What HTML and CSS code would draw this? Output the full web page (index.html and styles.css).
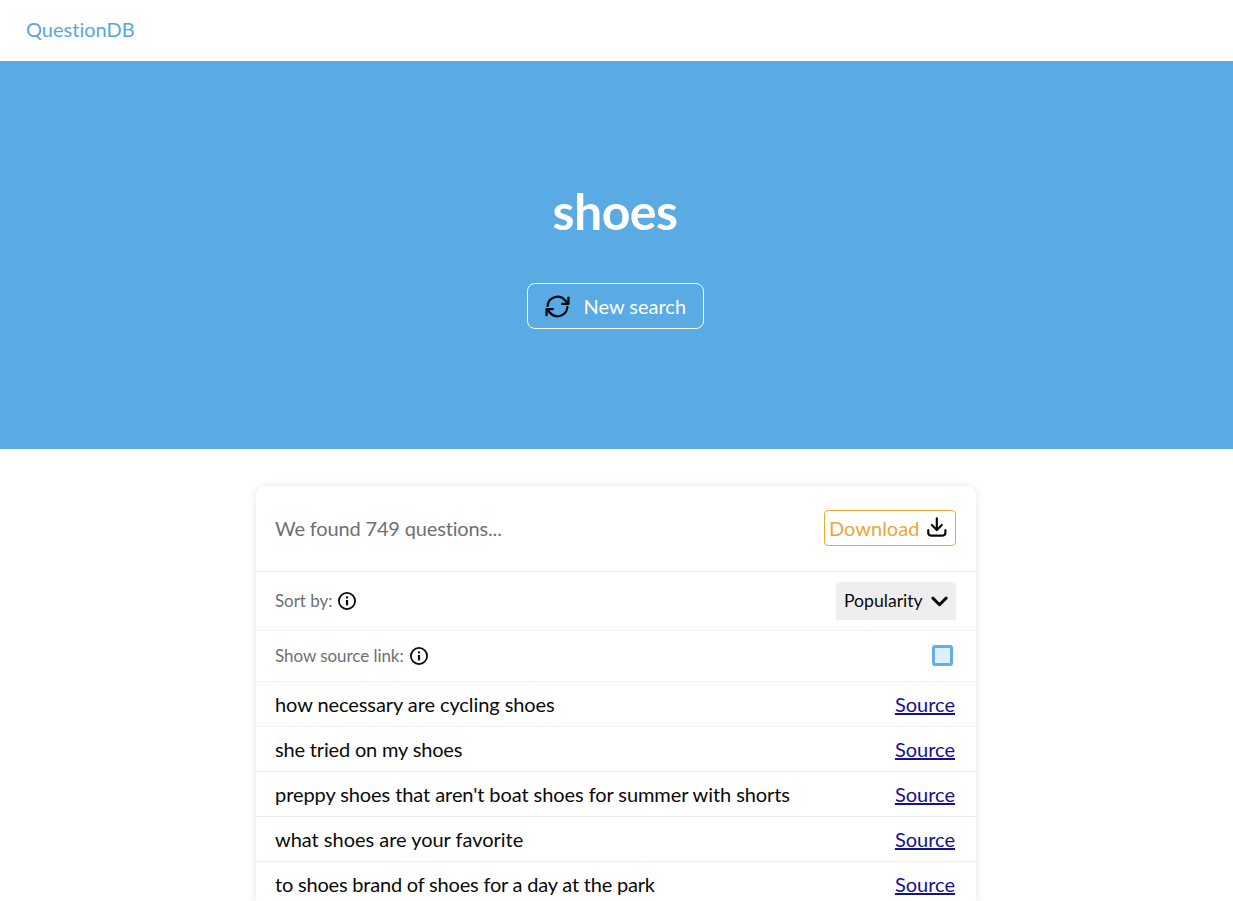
FILE: index.html
```html
<!DOCTYPE html>
<html lang="en">
<head>
<meta charset="utf-8">
<title>QuestionDB - shoes</title>
<link rel="stylesheet" href="styles.css">
</head>
<body>
<nav class="navbar"><a class="brand" href="#">QuestionDB</a></nav>
<section class="hero">
  <h1 class="hero-title">shoes</h1>
  <a class="new-search" href="#">
    <svg class="refresh-icon" viewBox="0 0 24 24" fill="none" stroke="currentColor" stroke-width="2.2" stroke-linecap="round" stroke-linejoin="round"><path d="M2.5 11.5A9.5 9.5 0 0 1 19.2 6L22 9"/><path d="M22.5 3.5V9.5H16.5"/><path d="M21.5 12.5A9.5 9.5 0 0 1 4.8 18L2 15"/><path d="M1.5 20.5V14.5H7.5"/></svg>
    <span>New search</span>
  </a>
</section>
<main class="content">
  <div class="card">
    <div class="card-head">
      <span class="found">We found 749 questions...</span>
      <a class="download" href="#">Download
        <svg class="download-icon" viewBox="0 0 24 24" fill="none" stroke="currentColor" stroke-width="2.4" stroke-linecap="round" stroke-linejoin="round"><path d="M12 2.5V15"/><path d="M6.5 9.8L12 15.3L17.5 9.8"/><path d="M2.5 15.5V18.5A3 3 0 0 0 5.5 21.5H18.5A3 3 0 0 0 21.5 18.5V15.5"/></svg>
      </a>
    </div>
    <div class="option option-sort">
      <span class="option-label">Sort by:
        <svg class="info-icon" viewBox="0 0 20 20" fill="none" stroke="currentColor" stroke-width="1.8"><circle cx="10" cy="10" r="8.1"/><path d="M10 9V14.4" stroke-width="2.2"/><path d="M10 5.4V7.4" stroke-width="2.2"/></svg>
      </span>
      <div class="select">Popularity
        <svg class="chevron" viewBox="0 0 16 10" fill="none" stroke="currentColor" stroke-width="2.8" stroke-linecap="round" stroke-linejoin="round"><path d="M1.8 1.8L8 8L14.2 1.8"/></svg>
      </div>
    </div>
    <div class="option option-source">
      <span class="option-label">Show source link:
        <svg class="info-icon" viewBox="0 0 20 20" fill="none" stroke="currentColor" stroke-width="1.8"><circle cx="10" cy="10" r="8.1"/><path d="M10 9V14.4" stroke-width="2.2"/><path d="M10 5.4V7.4" stroke-width="2.2"/></svg>
      </span>
      <span class="checkbox"></span>
    </div>
    <ul class="questions">
      <li class="question"><span>how necessary are cycling shoes</span><a href="#">Source</a></li>
      <li class="question"><span>she tried on my shoes</span><a href="#">Source</a></li>
      <li class="question"><span>preppy shoes that aren't boat shoes for summer with shorts</span><a href="#">Source</a></li>
      <li class="question"><span>what shoes are your favorite</span><a href="#">Source</a></li>
      <li class="question"><span>to shoes brand of shoes for a day at the park</span><a href="#">Source</a></li>
    </ul>
  </div>
</main>
</body>
</html>
```

FILE: styles.css
```css
* { box-sizing: border-box; }
html, body { margin: 0; padding: 0; height: 901px; overflow: hidden; background: #fff; }
body { font-family: Lato, "Noto Sans", sans-serif; color: #0a0a0a; font-variant-ligatures: none; }

.navbar { height: 61px; display: flex; align-items: center; padding: 0 26px 4px; }
.brand { color: #5aa6da; font-size: 20px; text-decoration: none; }

.hero { height: 388px; background: #5aaae4; display: flex; flex-direction: column; align-items: center; padding: 118px 3px 0 0; }
.hero-title { margin: 0; color: #fff; font-size: 50px; line-height: 64px; font-weight: 700; letter-spacing: -0.5px; }
.new-search { margin-top: 40px; width: 177px; height: 46px; display: flex; align-items: center; gap: 14px; padding-left: 17px; color: #fff; font-size: 20px; text-decoration: none; border: 1px solid #fff; border-radius: 8px; }
.refresh-icon { width: 25px; height: 25px; color: #0a0a14; }

.content { display: flex; justify-content: center; padding: 37px 1px 0 0; }
.card { width: 720px; background: #fff; border-radius: 10px; box-shadow: 0 0 8px rgba(0,0,0,.1); }
.card-head { height: 86px; display: flex; align-items: center; justify-content: space-between; padding: 0 20px 2px 19px; border-bottom: 1px solid #ededed; }
.found { color: #6f6f6f; font-size: 20px; letter-spacing: -0.16px; }
.download { display: flex; align-items: center; gap: 7px; height: 36px; width: 132px; padding: 0 7px 0 4px; color: #e9a83a; font-size: 20px; text-decoration: none; border: 1px solid #e9a83a; border-radius: 4px; }
.download-icon { width: 22px; height: 22px; margin-top: -1px; color: #0a0a0a; }

.option { display: flex; align-items: center; justify-content: space-between; padding: 0 20px 0 19px; border-bottom: 1px solid #ededed; }
.option-sort { height: 59px; }
.option-source { height: 51px; }
.option-label { display: flex; align-items: center; gap: 5px; color: #6f6f6f; font-size: 17px; margin-top: -2px; letter-spacing: -0.05px; }
.info-icon { width: 20px; height: 20px; color: #0a0a0a; margin-top: 2px; }
.select { width: 120px; height: 38px; display: flex; align-items: center; gap: 8px; padding: 0 0 2px 8px; background: #eee; border-radius: 3px; font-size: 17.6px; color: #0a0a0a; }
.chevron { width: 17px; height: 11px; margin-top: 2px; }
.checkbox { width: 21px; height: 21px; margin: -1px 3px 0 0; background: #dcf0fb; border: 3px solid #62aee6; border-radius: 3px; }

.questions { list-style: none; margin: 0; padding: 0; }
.question { height: 45px; display: flex; align-items: center; justify-content: space-between; padding: 0 21px 0 19px; border-bottom: 1px solid #ededed; font-size: 20px; }
.question span { letter-spacing: -0.08px; }
.question:nth-child(2) span { letter-spacing: -0.17px; }
.question:nth-child(4) span { letter-spacing: -0.02px; }
.question:nth-child(5) span { letter-spacing: -0.2px; }
.question a { color: #15118f; }
```
